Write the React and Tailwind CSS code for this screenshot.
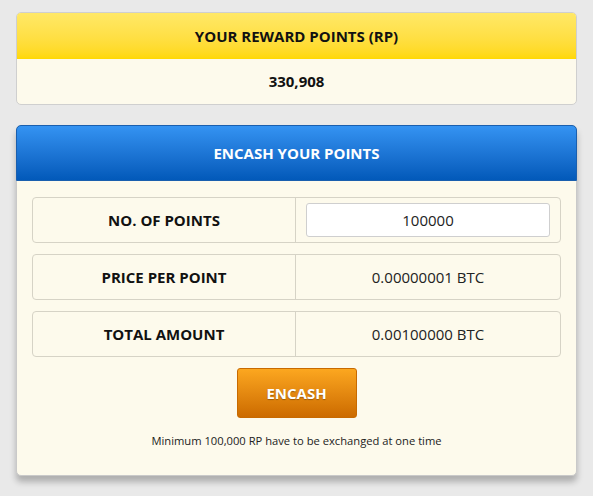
export default function App() {
  const rows = [
    { label: 'NO. OF POINTS', value: '100000', input: true },
    { label: 'PRICE PER POINT', value: '0.00000001 BTC' },
    { label: 'TOTAL AMOUNT', value: '0.00100000 BTC' },
  ];

  return (
    <div className="min-h-[496px] bg-[#e9e9e9] px-4 pt-3 pb-4 font-['Open_Sans',sans-serif] text-[#111]">
      {/* Reward points */}
      <div className="rounded-[5px] border border-[#cfcfcf] overflow-hidden bg-[#fdfaec]">
        <div className="h-[46px] flex items-center justify-center bg-gradient-to-b from-[#ffe866] to-[#ffd800] text-[15px] font-bold">
          YOUR REWARD POINTS (RP)
        </div>
        <div className="h-[45px] flex items-center justify-center text-[15px] font-bold">330,908</div>
      </div>

      {/* Encash */}
      <div className="mt-[20px] rounded-[5px] border border-[#c9c9c9] bg-[#fdfaec] shadow-[0_6px_6px_rgba(0,0,0,0.25)]">
        <div className="h-[56px] -mx-px -mt-px rounded-t-[5px] flex items-center justify-center bg-gradient-to-b from-[#3493f2] to-[#0259b9] border border-[#1a5fae] text-white text-[15px] font-bold">
          ENCASH YOUR POINTS
        </div>
        <div className="px-[15px] pt-[16px] pb-[25px] flex flex-col gap-[11px]">
          {rows.map((r) => (
            <div key={r.label} className="h-[46px] flex rounded-[4px] border border-[#d6d3c6]">
              <div className="w-[263px] flex items-center justify-center border-r border-[#d6d3c6] text-[15px] font-bold">
                {r.label}
              </div>
              <div className="flex-1 flex items-center justify-center px-[10px] text-[15px] text-[#222]">
                {r.input ? (
                  <input
                    defaultValue={r.value}
                    className="w-full h-[34px] rounded-[3px] border border-[#cfcfcf] bg-white text-center text-[15px] text-[#222] outline-none"
                  />
                ) : (
                  r.value
                )}
              </div>
            </div>
          ))}
          <button className="mx-auto w-[120px] h-[50px] rounded-[3px] border border-[#c86a00] bg-gradient-to-b from-[#fca71f] to-[#cc6b00] text-white text-[15px] font-bold [text-shadow:0_1px_1px_rgba(0,0,0,0.3)]">
            ENCASH
          </button>
          <p className="text-center text-[11.2px] text-[#222] mt-[4px]">
            Minimum 100,000 RP have to be exchanged at one time
          </p>
        </div>
      </div>
    </div>
  );
}
